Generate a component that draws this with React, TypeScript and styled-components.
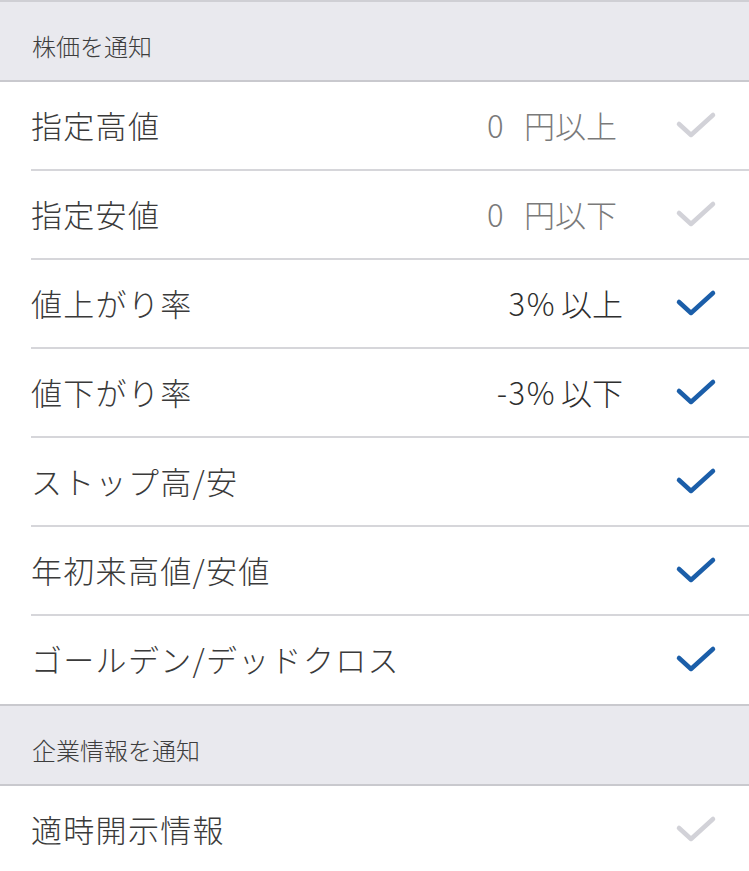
import styled, { createGlobalStyle } from "styled-components"

const Global = createGlobalStyle`
body{
    margin: 0;
    background: #ffffff;
    font-family: "Noto Sans CJK JP", "Noto Sans", sans-serif;
}
`

type Item = { label: string; value?: string; unit?: string; on: boolean; input?: boolean }

const stock: Item[] = [
    { label: "指定高値", value: "0", unit: "円以上", on: false, input: true },
    { label: "指定安値", value: "0", unit: "円以下", on: false, input: true },
    { label: "値上がり率", value: "3%", unit: "以上", on: true },
    { label: "値下がり率", value: "-3%", unit: "以下", on: true },
    { label: "ストップ高/安", on: true },
    { label: "年初来高値/安値", on: true },
    { label: "ゴールデン/デッドクロス", on: true },
]

const company: Item[] = [{ label: "適時開示情報", on: false }]

const Check = ({ on }: { on: boolean }) => (
    <CheckBox>
        <svg width="42" height="30" viewBox="0 0 42 30">
            <path
                d="M4 13 L16 24 L38 4"
                fill="none"
                stroke={on ? "#1b5ea9" : "#d2d2d8"}
                strokeWidth="4.5"
                strokeLinecap="round"
                strokeLinejoin="round"
            />
        </svg>
    </CheckBox>
)

const Section = ({ title, items }: { title: string; items: Item[] }) => (
    <>
        <Head>
            <p>{title}</p>
        </Head>
        <List>
            {items.map((it) => (
                <Row key={it.label}>
                    <Label>{it.label}</Label>
                    {it.value && (
                        <Value $input={it.input}>
                            <span>{it.value}</span>
                            {it.unit}
                        </Value>
                    )}
                    <Check on={it.on} />
                </Row>
            ))}
        </List>
    </>
)

const App = () => {
    return (
        <Cont>
            <Global />
            <Section title="株価を通知" items={stock} />
            <Section title="企業情報を通知" items={company} />
        </Cont>
    )
}
export default App

const Cont = styled.div`
width: 749px;
height: 871px;
overflow: hidden;
border-top: 2px solid #cfcfd4;
box-sizing: border-box;
`
const Head = styled.div`
height: 78px;
background-color: #e9e9ee;
border-bottom: 2px solid #c9c9ce;
display: flex;
align-items: flex-end;
padding-left: 32px;
p{
    margin: 0 0 19px;
    font-size: 24px;
    font-weight: 300;
    color: #3d3d3d;
    line-height: 30px;
}
`
const List = styled.div`
background: #ffffff;
border-bottom: 2px solid #c9c9ce;
`
const Row = styled.div`
height: 87px;
margin-left: 31px;
display: flex;
align-items: center;
border-bottom: 2px solid #d6d6da;
&:last-child{
    border-bottom: none;
    height: 88px;
}
`
const Label = styled.div`
flex: 1;
font-size: 31px;
font-weight: 300;
color: #3a3a3a;
letter-spacing: 1.3px;
padding-bottom: 3px;
`
const Value = styled.div<{ $input?: boolean }>`
font-size: 31px;
font-weight: 300;
padding-bottom: 3px;
color: ${(p) => (p.$input ? "#7a7a7a" : "#2e2e2e")};
margin-right: ${(p) => (p.$input ? "58px" : "52px")};
span{
    letter-spacing: 1.5px;
    margin-right: ${(p) => (p.$input ? "19px" : "5px")};
}
`
const CheckBox = styled.div`
width: 42px;
margin-right: 32px;
display: flex;
svg{
    display: block;
}
`
